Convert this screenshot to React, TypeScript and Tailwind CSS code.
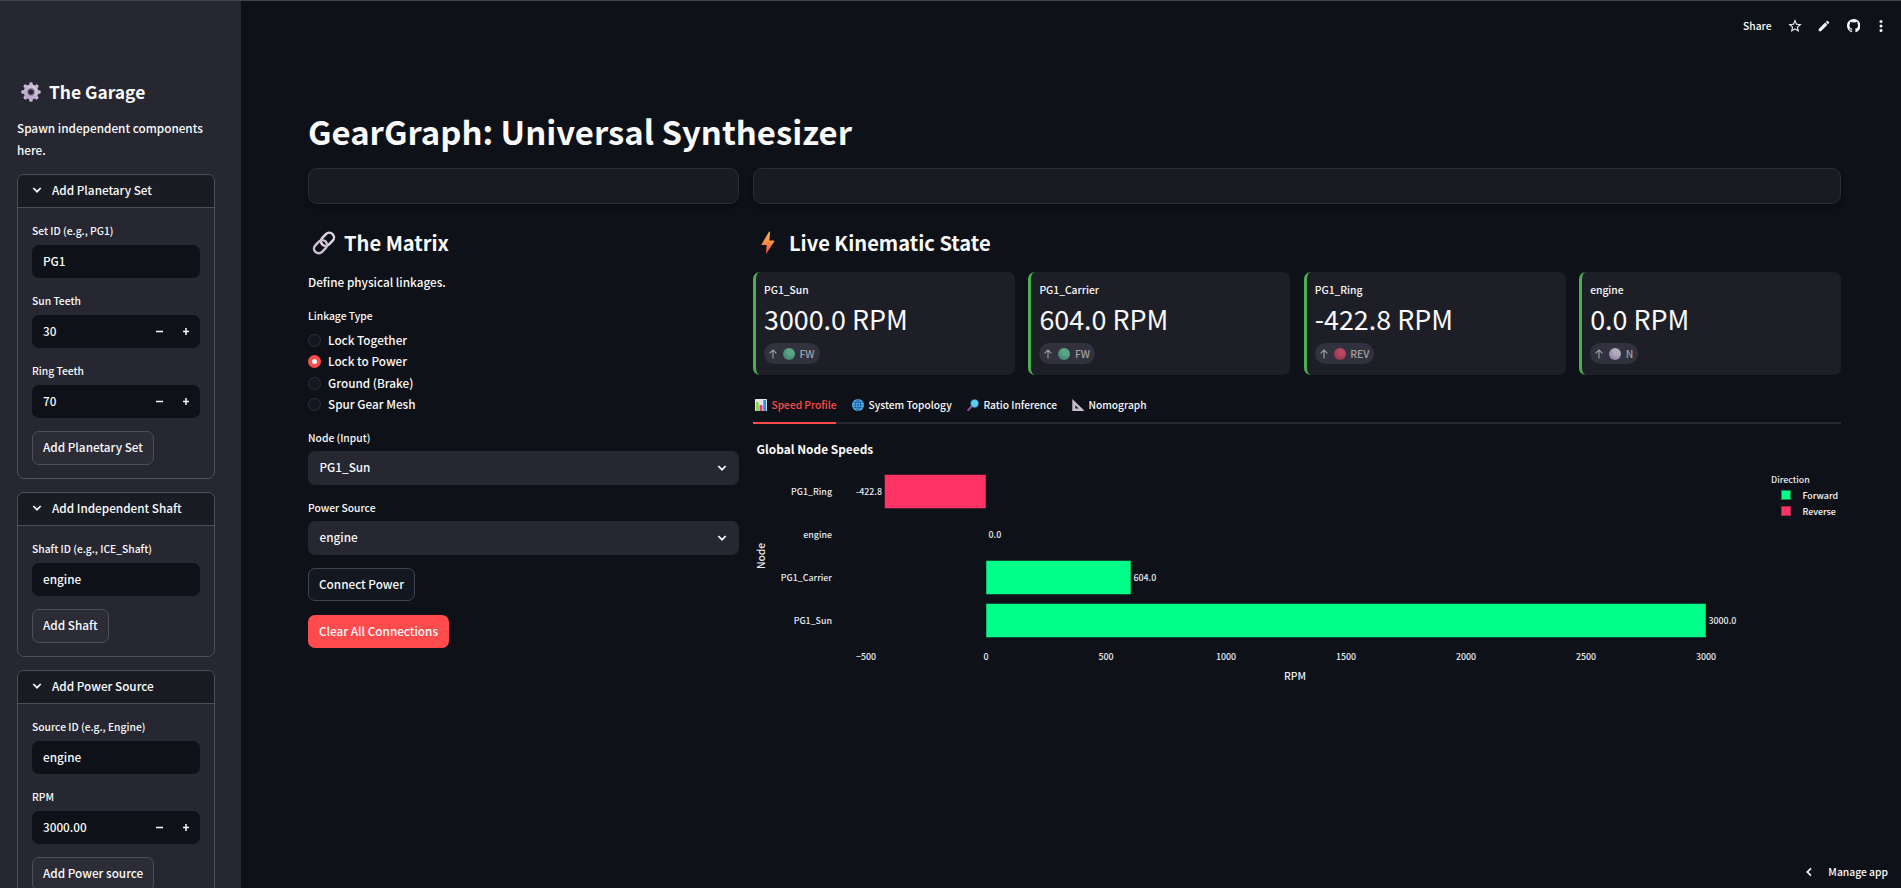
import React, { useState } from "react";
import clsx from "clsx";

const metrics = [
  { name: "PG1_Sun", value: "3000.0 RPM", dir: "FW", color: "green" },
  { name: "PG1_Carrier", value: "604.0 RPM", dir: "FW", color: "green" },
  { name: "PG1_Ring", value: "-422.8 RPM", dir: "REV", color: "red" },
  { name: "engine", value: "0.0 RPM", dir: "N", color: "white" },
];

const ballColors: Record<string, [string, string]> = {
  green: ["#5aa882", "#3f7f74"],
  red: ["#b9495f", "#8f3448"],
  white: ["#b3adbb", "#8a79a8"],
};

const linkTypes = ["Lock Together", "Lock to Power", "Ground (Brake)", "Spur Gear Mesh"];

const speeds = [
  { node: "PG1_Ring", rpm: -422.8 },
  { node: "engine", rpm: 0 },
  { node: "PG1_Carrier", rpm: 604 },
  { node: "PG1_Sun", rpm: 3000 },
];

const ticks = [-500, 0, 500, 1000, 1500, 2000, 2500, 3000];

function Chevron({ className }: { className?: string }) {
  return (
    <svg viewBox="0 0 10 10" className={clsx("size-[10px]", className)} fill="none">
      <path d="M1.3 3 5 6.7 8.7 3" stroke="currentColor" strokeWidth="1.7" />
    </svg>
  );
}

function GearIcon() {
  return (
    <svg viewBox="0 0 20 20" className="size-5">
      <defs>
        <linearGradient id="gear" x1="0.8" y1="0" x2="0.2" y2="1">
          <stop offset="0" stopColor="#dcd3e4" />
          <stop offset="1" stopColor="#b3a0c4" />
        </linearGradient>
      </defs>
      <g fill="url(#gear)">
        <circle cx="10" cy="10" r="7.4" />
        {[0, 45, 90, 135, 180, 225, 270, 315].map((a) => (
          <path key={a} d="M8 3.5 8.5.7Q10-.1 11.5.7L12 3.5Z" transform={`rotate(${a} 10 10)`} />
        ))}
      </g>
      <circle cx="10" cy="10" r="4.2" fill="#9c8db0" />
      <circle cx="10" cy="10" r="2.8" fill="#2b2933" />
    </svg>
  );
}

function LinkIcon() {
  return (
    <svg viewBox="0 0 24 24" className="h-[24px] w-6" fill="none" strokeWidth="2.5">
      <rect x="8.2" y="3.6" width="14.6" height="9.4" rx="4.7" stroke="#ddd2e2" transform="rotate(-46 15.5 8.3)" />
      <rect x="1.2" y="11" width="14.6" height="9.4" rx="4.7" stroke="#cbbdd4" transform="rotate(-46 8.5 15.7)" />
    </svg>
  );
}

function BoltIcon() {
  return (
    <svg viewBox="0 0 14 24" className="h-6 w-[14px]">
      <defs>
        <linearGradient id="bolt" x1="0" y1="0" x2="0" y2="1">
          <stop offset="0.1" stopColor="#ffb648" />
          <stop offset="0.55" stopColor="#fb8447" />
          <stop offset="1" stopColor="#ee4350" />
        </linearGradient>
      </defs>
      <path d="M8.2.6.6 13.2Q.4 14 1.2 14H5.6L4.9 23.2 13.3 10.4Q13.5 9.6 12.8 9.6H8.4L9 .8Z" fill="url(#bolt)" />
    </svg>
  );
}

function BarsIcon() {
  return (
    <svg viewBox="0 0 12 12" className="size-3 shrink-0">
      <rect width="12" height="12" rx="0.6" fill="#e8e1ec" />
      <rect x="1" y="3" width="2.8" height="9" fill="#86d64a" />
      <rect x="4.6" y="6" width="2.8" height="6" fill="#e8357b" />
      <rect x="8.3" y="1" width="2.8" height="11" fill="#2f8fe8" />
    </svg>
  );
}

function GlobeIcon() {
  return (
    <svg viewBox="0 0 12 12" className="size-3 shrink-0" fill="none">
      <circle cx="6" cy="6" r="6" fill="#4db4f5" />
      <g stroke="#14457c" strokeWidth="0.65">
        <ellipse cx="6" cy="6" rx="2.6" ry="5.3" />
        <path d="M6 .6V11.4M.6 6H11.4M1.5 3.4H10.5M1.5 8.6H10.5" />
      </g>
    </svg>
  );
}

function LensIcon() {
  return (
    <svg viewBox="0 0 12 12" className="size-3 shrink-0">
      <path d="M1.3 10.9 5 7" stroke="#8b4a92" strokeWidth="2.2" strokeLinecap="round" />
      <circle cx="7.6" cy="4.5" r="4.2" fill="#3f87bd" />
      <circle cx="7.6" cy="4.5" r="3.4" fill="#5bd0f5" />
    </svg>
  );
}

function RulerIcon() {
  return (
    <svg viewBox="0 0 12 12" className="size-3 shrink-0">
      <path d="M.3 0 12 11.3V12H.3ZM3.3 6.3V9.4H6.6Z" fill="#c6bdcd" fillRule="evenodd" />
    </svg>
  );
}

function FieldLabel({ children }: { children: React.ReactNode }) {
  return <div className="h-[24px] text-[10.3px] leading-[20px]">{children}</div>;
}

function TextField({ label, value, stepper }: { label: string; value: string; stepper?: boolean }) {
  return (
    <div className="mb-[13px]">
      <FieldLabel>{label}</FieldLabel>
      <div className="flex h-[33px] items-center rounded-[7px] bg-[#0e1117] pl-[11px]">
        <span className="flex-1 pb-[2px]">{value}</span>
        {stepper && (
          <svg viewBox="0 0 54 33" className="h-[33px] w-[54px]" stroke="#fafafa" strokeWidth="1.5">
            <path d="M10 16.5H17M37 16.5H43M40 13V20" />
          </svg>
        )}
      </div>
    </div>
  );
}

function Expander({ title, button, children }: { title: string; button: string; children: React.ReactNode }) {
  return (
    <section className="mb-[13px] rounded-[7px] border border-[#4f4f59]">
      <div className="flex h-[33px] items-center rounded-t-[6px] border-b border-[#4f4f59] bg-[#1a1c24] pb-[2px] pl-[14px]">
        <Chevron className="mr-[10px]" />
        <span>{title}</span>
      </div>
      <div className="px-[14px] pt-[13px] pb-[13px]">
        {children}
        <SideButton>{button}</SideButton>
      </div>
    </section>
  );
}

function SideButton({ children }: { children: React.ReactNode }) {
  return (
    <button className="block h-[34px] rounded-[7px] border border-[#4f4f59] bg-[#2b2c36] px-[10px] pb-[3px] whitespace-nowrap">
      {children}
    </button>
  );
}

function Select({ label, value }: { label: string; value: string }) {
  return (
    <div className="mb-[12px]">
      <div className="h-[24px] text-[10.3px] leading-[22px]">{label}</div>
      <div className="flex h-[34px] items-center justify-between rounded-[7px] bg-[#262730] pr-3 pl-[11.5px]">
        <span className="pb-[2px]">{value}</span>
        <Chevron />
      </div>
    </div>
  );
}

function MetricCard({ name, value, dir, color }: (typeof metrics)[number]) {
  const [light, dark] = ballColors[color];
  return (
    <div className="h-[103px] rounded-[7px] border-l-3 border-[#4caf50] bg-[#1e1e27] pt-[10px] pl-2">
      <div className="text-[10.3px] leading-4">{name}</div>
      <div className="mt-[3px] text-[26.85px] leading-[36px] font-normal">{value}</div>
      <div className="mt-[6px] inline-flex h-[21px] items-center rounded-full bg-[#31323d] px-[5px] text-[10.3px] text-[#a0a0a6]">
        <svg viewBox="0 0 8 10" className="h-[10px] w-2" fill="none" stroke="currentColor" strokeWidth="1.1">
          <path d="M4 9.5V1M.6 4.4 4 1 7.4 4.4" />
        </svg>
        <svg viewBox="0 0 12 12" className="mr-[4.5px] ml-[6px] size-3">
          <defs>
            <radialGradient id={`ball-${color}`} cx="0.65" cy="0.3" r="0.8">
              <stop offset="0.3" stopColor={light} />
              <stop offset="1" stopColor={dark} />
            </radialGradient>
          </defs>
          <circle cx="6" cy="6" r="6" fill={`url(#ball-${color})`} />
        </svg>
        {dir}
      </div>
    </div>
  );
}

function SpeedChart() {
  const x = (rpm: number) => 233 + rpm * 0.24;
  return (
    <svg viewBox="0 0 1088 264" className="h-[264px] w-[1088px] text-[8.85px]" fill="#e6eaf1">
      <text x="3.5" y="30" className="text-[11.9px] font-bold" fill="#fafafa">Global Node Speeds</text>
      {speeds.map(({ node, rpm }, i) => {
        const mid = 67.5 + i * 43;
        return (
          <g key={node}>
            <text x="79" y={mid + 3.5} textAnchor="end">{node}</text>
            {rpm !== 0 && (
              <rect
                x={Math.min(x(0), x(rpm))}
                y={mid - 17}
                width={Math.abs(rpm) * 0.24}
                height="34"
                fill={rpm > 0 ? "#00ff88" : "#ff3366"}
                stroke="#0e1117"
                strokeOpacity="0.5"
              />
            )}
            <text x={x(rpm) + (rpm < 0 ? -2.5 : 2.5)} y={mid + 3.5} textAnchor={rpm < 0 ? "end" : "start"}>
              {rpm.toFixed(1)}
            </text>
          </g>
        );
      })}
      {ticks.map((t) => (
        <text key={t} x={x(t)} y="236" textAnchor="middle">{String(t).replace("-", "−")}</text>
      ))}
      <text x="542" y="256" textAnchor="middle" className="text-[10.3px]">RPM</text>
      <text x="0" y="0" textAnchor="middle" className="text-[10.3px]" transform="translate(12 132) rotate(-90)">Node</text>
      <text x="1018" y="58.8">Direction</text>
      <rect x="1028.5" y="66.5" width="9" height="9" fill="#00ff88" stroke="#08884f" />
      <rect x="1028.5" y="82.5" width="9" height="9" fill="#ff3366" stroke="#a8274b" />
      <text x="1049.5" y="74.8" fill="#fafafa">Forward</text>
      <text x="1049.5" y="90.8" fill="#fafafa">Reverse</text>
    </svg>
  );
}

function Toolbar() {
  return (
    <div className="flex h-[50px] items-center justify-end pr-[15px]">
      <span className="mr-[15px] text-[10.3px]">Share</span>
      <svg viewBox="0 0 24 24" className="mr-[14px] size-[16px]" fill="#fafafa">
        <path d="m22 9.24-7.19-.62L12 2 9.19 8.63 2 9.24l5.46 4.73L5.82 21 12 17.27 18.18 21l-1.63-7.03L22 9.24zM12 15.4l-3.76 2.27 1-4.28-3.32-2.88 4.38-.38L12 6.1l1.71 4.04 4.38.38-3.32 2.88 1 4.28L12 15.4z" />
      </svg>
      <svg viewBox="0 0 24 24" className="mr-[16px] size-[14px]" fill="#fafafa">
        <path d="M3 17.25V21h3.75L17.81 9.94l-3.75-3.75L3 17.25zM20.71 7.04a1 1 0 0 0 0-1.41l-2.34-2.34a1 1 0 0 0-1.41 0l-1.83 1.83 3.75 3.75 1.83-1.83z" />
      </svg>
      <svg viewBox="0 0 16 16" className="mr-[16px] size-[13.5px]" fill="#fafafa">
        <path d="M8 0C3.58 0 0 3.58 0 8c0 3.54 2.29 6.53 5.47 7.59.4.07.55-.17.55-.38 0-.19-.01-.82-.01-1.49-2.01.37-2.53-.49-2.69-.94-.09-.23-.48-.94-.82-1.13-.28-.15-.68-.52-.01-.53.63-.01 1.08.58 1.23.82.72 1.21 1.87.87 2.33.66.07-.52.28-.87.51-1.07-1.78-.2-3.64-.89-3.64-3.95 0-.87.31-1.59.82-2.15-.08-.2-.36-1.02.08-2.12 0 0 .67-.21 2.2.82a7.6 7.6 0 0 1 4 0c1.53-1.04 2.2-.82 2.2-.82.44 1.1.16 1.92.08 2.12.51.56.82 1.27.82 2.15 0 3.07-1.87 3.75-3.65 3.95.29.25.54.73.54 1.48 0 1.07-.01 1.93-.01 2.2 0 .21.15.46.55.38A8 8 0 0 0 16 8c0-4.42-3.58-8-8-8z" />
      </svg>
      <svg viewBox="0 0 10 14" className="h-[14px] w-[10px]" fill="#fafafa">
        <circle cx="5" cy="2.5" r="1.5" />
        <circle cx="5" cy="7" r="1.5" />
        <circle cx="5" cy="11.5" r="1.5" />
      </svg>
    </div>
  );
}

const tabs = [
  { label: "Speed Profile", icon: <BarsIcon />, width: "w-[83px]" },
  { label: "System Topology", icon: <GlobeIcon />, width: "w-[101px]" },
  { label: "Ratio Inference", icon: <LensIcon />, width: "w-[91px]" },
  { label: "Nomograph", icon: <RulerIcon />, width: "w-[77px]" },
];

export default function App() {
  const [linkType, setLinkType] = useState("Lock to Power");
  const [tab, setTab] = useState("Speed Profile");

  return (
    <div className="flex h-screen overflow-hidden border-t border-[#41454a] bg-[#0e1117] font-['Noto_Sans_CJK_SC',sans-serif] text-[11.75px] leading-[20px] font-medium text-[#fafafa]">
      <aside className="h-full w-[241px] shrink-0 overflow-hidden bg-[#262730] pr-[26px] pl-[17px]">
        <h2 className="mt-[78px] flex h-[26px] items-center gap-2 pl-[4px] text-[17.4px] font-semibold whitespace-nowrap">
          <GearIcon />
          The Garage
        </h2>
        <p className="mt-[12px] mb-[13px] h-[44px] leading-[22px]">Spawn independent components here.</p>

        <Expander title="Add Planetary Set" button="Add Planetary Set">
          <TextField label="Set ID (e.g., PG1)" value="PG1" />
          <TextField label="Sun Teeth" value="30" stepper />
          <TextField label="Ring Teeth" value="70" stepper />
        </Expander>
        <Expander title="Add Independent Shaft" button="Add Shaft">
          <TextField label="Shaft ID (e.g., ICE_Shaft)" value="engine" />
        </Expander>
        <Expander title="Add Power Source" button="Add Power source">
          <TextField label="Source ID (e.g., Engine)" value="engine" />
          <TextField label="RPM" value="3000.00" stepper />
        </Expander>
      </aside>

      <main className="relative flex-1">
        <Toolbar />
        <div className="pr-[60px] pl-[67px]">
          <h1 className="mt-[55px] h-[50px] text-[32.87px] leading-[50px] font-bold whitespace-nowrap">
            GearGraph: Universal Synthesizer
          </h1>

          <div className="mt-[12px] grid grid-cols-[431px_1088px] gap-x-[14px]">
            <div className="h-9 rounded-[9px] border border-[#2c2d34] bg-[#1a1a22] shadow-[0_3px_5px_rgba(0,0,0,0.3)]" />
            <div className="h-9 rounded-[9px] border border-[#2c2d34] bg-[#1a1a22] shadow-[0_3px_5px_rgba(0,0,0,0.3)]" />

            <section className="pt-[25px]">
              <h3 className="flex h-7 items-center gap-2 pl-1 text-[20.1px] font-semibold">
                <LinkIcon />
                The Matrix
              </h3>
              <p className="mt-[15px]">Define physical linkages.</p>

              <div className="mt-[15px] h-[23px] text-[10.3px] leading-[18px]">Linkage Type</div>
              {linkTypes.map((type) => (
                <label key={type} className="flex h-[21.3px] items-center gap-[7px]" onClick={() => setLinkType(type)}>
                  <span
                    className={clsx(
                      "flex size-[13px] items-center justify-center rounded-full",
                      linkType === type ? "bg-[#ff4b4b]" : "border border-[#30323a] bg-[#131720]"
                    )}
                  >
                    {linkType === type && <span className="size-[5px] rounded-full bg-white" />}
                  </span>
                  <span className="pb-px">{type}</span>
                </label>
              ))}

              <div className="mt-[12px]">
                <Select label="Node (Input)" value="PG1_Sun" />
                <Select label="Power Source" value="engine" />
              </div>
              <button className="mt-[13px] block h-[33px] rounded-[7px] border border-[#41444c] bg-[#131720] px-[10px] pb-px">
                Connect Power
              </button>
              <button className="mt-[14px] block h-[33px] rounded-[7px] bg-[#ff4b4b] px-[11px] pb-px">
                Clear All Connections
              </button>
            </section>

            <section className="pt-[25px]">
              <h3 className="flex h-7 items-center gap-[14px] pl-[8px] text-[20.1px] font-semibold">
                <BoltIcon />
                Live Kinematic State
              </h3>
              <div className="mt-[15px] grid grid-cols-4 gap-x-[13.5px]">
                {metrics.map((m) => (
                  <MetricCard key={m.name} {...m} />
                ))}
              </div>

              <div className="mt-[14px] flex h-[35px] gap-[14px] border-b-2 border-[#262730]">
                {tabs.map(({ label, icon, width }) => (
                  <button
                    key={label}
                    onClick={() => setTab(label)}
                    className={clsx(
                      "flex h-[35px] items-center gap-[5px] border-b-2 pb-[2px] pl-[1.5px] text-[10.2px] whitespace-nowrap",
                      width,
                      tab === label ? "border-[#ff4b4b] text-[#ff4b4b]" : "border-transparent"
                    )}
                  >
                    {icon}
                    {label}
                  </button>
                ))}
              </div>
              <SpeedChart />
            </section>
          </div>
        </div>

        <div className="absolute right-[13px] bottom-[6px] flex items-center gap-[14px] text-[10.3px]">
          <Chevron className="rotate-90" />
          Manage app
        </div>
      </main>
    </div>
  );
}
